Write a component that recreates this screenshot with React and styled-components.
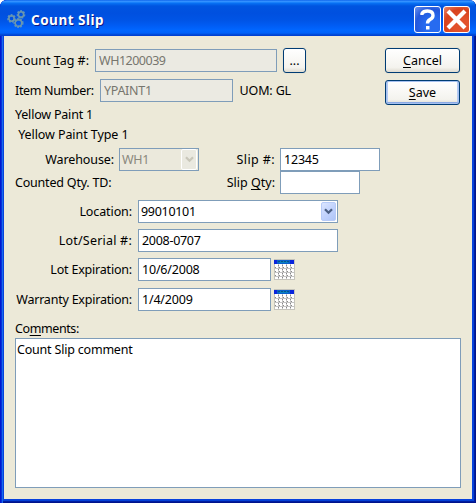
import React from "react";
import styled, { createGlobalStyle, css } from "styled-components";

const Global = createGlobalStyle`
  * { box-sizing: border-box; }
  body { margin: 0; background: #fff; }
`;

const Window = styled.main`
  width: 476px;
  height: 503px;
  padding: 0 4px 4px;
  display: flex;
  flex-direction: column;
  overflow: hidden;
  border-radius: 7px 7px 0 0;
  background: #0842dc;
  box-shadow: inset 1px 0 #0019cf, inset 2px 0 #0831d9, inset 3px 0 #166aee,
    inset -1px -1px #00138c, inset -2px -2px #001ea0, inset -3px -3px #0441d8;
  font-family: "Noto Sans", sans-serif;
  font-size: 12.5px;
  line-height: 15px;
  color: #000;
`;

const TitleBar = styled.header`
  height: 36px;
  flex: none;
  margin: 0 -4px;
  padding: 6px 6px 3px 7px;
  display: flex;
  align-items: center;
  background: linear-gradient(#0058e6 0, #3a93ff 1px, #2a8fff 2px, #0873f5 3px, #0055e0 6px,
    #0050df 13px, #0054e5 20px, #005df5 26px, #0066ff 30px, #0062fa 33px, #0044cf 35px, #003dd7 36px);
`;

const Title = styled.h1`
  flex: 1;
  margin: 1px 0 0 5px;
  font: bold 13.5px/18px "Noto Sans", sans-serif;
  letter-spacing: ${(p) => p.$track}px;
  color: #fff;
  text-shadow: 1px 1px #0a1883;
`;

const CaptionButton = styled.button`
  width: 27px;
  height: 27px;
  margin-left: 2px;
  padding: 0;
  border: 1px solid #fff;
  border-radius: 3px;
  background: ${(p) =>
    p.$close
      ? "radial-gradient(circle at 70% 75%, #e2512b 30%, #d8421d 65%, #e88a70 100%)"
      : "radial-gradient(circle at 70% 75%, #276bf0 30%, #2458dc 65%, #6d94ef 100%)"};
  svg { display: block; }
`;

const Body = styled.form`
  flex: 1;
  display: flex;
  flex-direction: column;
  padding: 12px 11px 11px;
  background: #ece9d8;
`;

const Row = styled.div`
  display: flex;
  align-items: center;
  height: ${(p) => p.$h || 23}px;
  margin-top: ${(p) => p.$top || 0}px;
`;

const Label = styled.label`
  flex: none;
  width: ${(p) => p.$w}px;
  padding-right: ${(p) => p.$gap || 0}px;
  text-align: ${(p) => (p.$gap ? "right" : "left")};
  letter-spacing: ${(p) => p.$track || 0}px;
  white-space: nowrap;
  u { text-decoration-thickness: 1px; text-underline-offset: 2px; }
`;

const frame = css`
  border: 1px solid #7f9db9;
  background: #fff;
  font: inherit;
  color: #000;
`;

const Field = styled.input`
  ${frame}
  flex: none;
  width: ${(p) => p.$w}px;
  height: 23px;
  padding: 0 3px 1px;
  letter-spacing: ${(p) => p.$track || 0}px;
  outline: none;
  border-radius: 0;
  &:disabled { background: #ebeae2; color: #77766e; }
`;

const Combo = styled.div`
  ${frame}
  flex: none;
  display: flex;
  align-items: center;
  width: ${(p) => p.$w}px;
  height: 23px;
  padding: 0 1px 0 2px;
  letter-spacing: ${(p) => p.$track || 0}px;
  ${(p) => p.$off && css`background: #ebe9dc; color: #8a887c;`}
  span { flex: 1; }
`;

const DropArrow = styled.i`
  display: flex;
  align-items: center;
  justify-content: center;
  width: ${(p) => (p.$off ? 16 : 15)}px;
  height: ${(p) => (p.$off ? 21 : 19)}px;
  border: 1px solid ${(p) => (p.$off ? "#fff" : "#b7cbf8")};
  border-radius: 2px;
  background: ${(p) => (p.$off ? "#eae9e0" : "linear-gradient(135deg, #dce6ff, #c2d3fd 50%, #afc5f7)")};
`;

const TopGrid = styled.section`
  display: flex;
  justify-content: space-between;
  height: 54px;
`;

const Actions = styled.div`
  display: flex;
  flex-direction: column;
  gap: 7px;
  margin-right: 1px;
`;

const Button = styled.button`
  width: ${(p) => p.$w || 75}px;
  height: 25px;
  flex: none;
  padding: 0 0 1px;
  border: 1px solid #003c74;
  border-radius: 3px;
  background: linear-gradient(#fff, #f4f3ee 80%, #dfdbd0);
  box-shadow: ${(p) => (p.$primary ? "inset 0 0 0 1px #a6c1f0, inset 0 -2px #8aa9e4, inset 2px 0 #b5cbf3, inset -2px 0 #b5cbf3" : "0 0 0 1px #e6e3d3")};
  font: inherit;
  letter-spacing: ${(p) => p.$track || 0}px;
  color: #000;
  u { text-decoration-thickness: 1px; text-underline-offset: 2px; }
`;

const BrowseButton = styled(Button)`
  margin-left: 6px;
`;

const Comments = styled.textarea`
  ${frame}
  display: block;
  width: 446px;
  height: 150px;
  padding: 3px 1px;
  letter-spacing: ${(p) => p.$track}px;
  resize: none;
  outline: none;
`;

const CalendarSvg = styled.svg`
  flex: none;
  margin-left: 3px;
`;

const Gears = () => (
  <svg width="19" height="19" viewBox="0 0 19 19" fill="none">
    <g stroke="#5590c4" strokeWidth="2.6" strokeDasharray="1.6 1.1">
      <circle cx="4.5" cy="8.5" r="3.1" />
      <circle cx="14" cy="4.5" r="3.1" />
      <circle cx="11.5" cy="13" r="3.8" />
    </g>
    <g stroke="#6c97ac" strokeWidth="1.5">
      <circle cx="4.5" cy="8.5" r="2.7" />
      <circle cx="14" cy="4.5" r="2.7" />
      <circle cx="11.5" cy="13" r="3.3" />
    </g>
  </svg>
);

const Arrow = ({ off }) => (
  <DropArrow $off={off}>
    <svg width="9" height="7" viewBox="0 0 9 7" fill="none">
      <path d="M1 1.2 4.5 4.7 8 1.2" stroke={off ? "#c9c7ba" : "#4d6185"} strokeWidth="2.3" />
    </svg>
  </DropArrow>
);

const Calendar = () => (
  <CalendarSvg width="21" height="21" viewBox="0 0 21 21" shapeRendering="crispEdges">
    <path d="M0 0H21V21H0Z" fill="#c5c4bc" />
    <path d="M1 1H20V20H1Z" fill="#fff" />
    <path d="M0 1H20V5H0Z" fill="#0824dc" />
    <path d="M3 1H16V5H3Z" fill="#0860cc" />
    <path d="M5 2H14V4H5Z" fill="#087fc0" />
    <path d="M4 2.5H15" stroke="#075187" strokeDasharray="2 1" />
    <path d="M4.5 5V20M8.5 5V20M12.5 5V20M16.5 5V20M1 9.5H20M1 13.5H20M1 17.5H20" stroke="#c4c4c4" />
    <path d="M4 6.5H18M4 10.5H18M4 14.5H18M4 18.5H18" stroke="#85858b" strokeDasharray="1 3" />
    <path d="M1 8.5H18M1 12.5H18M1 16.5H18" stroke="#8b8b8b" strokeDasharray="1 3" />
  </CalendarSvg>
);

export default function App() {
  return (
    <>
      <Global />
      <Window>
        <TitleBar>
          <Gears />
          <Title $track={0.5}>Count Slip</Title>
          <CaptionButton type="button" aria-label="Help">
            <svg width="25" height="25" viewBox="0 0 25 25" fill="none">
              <path d="M7 8V6.5Q8.5 4 12.5 4Q18 4 18 8.5Q18 11 15 12.5Q12.5 14 12.5 16.5" stroke="#fff" strokeWidth="3.4" />
              <path d="M11 19H14.5V22.5H11Z" fill="#fff" />
            </svg>
          </CaptionButton>
          <CaptionButton type="button" aria-label="Close" $close>
            <svg width="25" height="25" viewBox="0 0 25 25">
              <path d="M4 4 21 21M21 4 4 21" stroke="#fff" strokeWidth="4.2" />
            </svg>
          </CaptionButton>
        </TitleBar>
        <Body>
          <TopGrid>
            <div>
              <Row $h={25}>
                <Label $w={80}>Count <u>T</u>ag #:</Label>
                <Field $w={182} $track={-0.5} disabled defaultValue="WH1200039" />
                <BrowseButton type="button" $w={23}>...</BrowseButton>
              </Row>
              <Row $top={6}>
                <Label $w={85} $track={-0.35}>Item Number:</Label>
                <Field $w={133} $track={-0.3} disabled defaultValue="YPAINT1" />
                <Label as="span" $w={64} $gap={6} $track={-0.15}>UOM: GL</Label>
              </Row>
            </div>
            <Actions>
              <Button type="button"><u>C</u>ancel</Button>
              <Button type="button" $primary><u>S</u>ave</Button>
            </Actions>
          </TopGrid>
          <Row $h={20} $top={2}><Label as="span" $w={200} $track={-0.2}>Yellow Paint 1</Label></Row>
          <Row $h={20}><Label as="span" $w={200} $track={-0.08}>&nbsp;Yellow Paint Type 1</Label></Row>
          <Row $top={4}>
            <Label $w={104} $gap={5} $track={-0.1}>Warehouse:</Label>
            <Combo $w={80} $off $track={-0.3}><span>WH1</span><Arrow off /></Combo>
            <Label $w={81} $gap={5} $track={0.4}>Slip #:</Label>
            <Field $w={100} $track={-0.2} defaultValue="12345" />
          </Row>
          <Row>
            <Label as="span" $w={104} $track={-0.2}>Counted Qty. TD:</Label>
            <Label $w={161} $gap={5}>Slip <u>Q</u>ty:</Label>
            <Field $w={80} />
          </Row>
          <Row $top={6}>
            <Label $w={123} $gap={6} $track={-0.1}>Location:</Label>
            <Combo $w={200} $track={-0.3}><span>99010101</span><Arrow /></Combo>
          </Row>
          <Row $top={6}>
            <Label $w={123} $gap={6} $track={0.22}>Lot/Serial #:</Label>
            <Field $w={200} $track={-0.3} defaultValue="2008-0707" />
          </Row>
          <Row $top={6}>
            <Label $w={123} $gap={6} $track={-0.2}>Lot Expiration:</Label>
            <Field $w={133} $track={-0.2} defaultValue="10/6/2008" />
            <Calendar />
          </Row>
          <Row $top={7}>
            <Label $w={123} $gap={6} $track={-0.22}>Warranty Expiration:</Label>
            <Field $w={133} $track={-0.2} defaultValue="1/4/2009" />
            <Calendar />
          </Row>
          <Row $h={19} $top={8}><Label $w={200} $track={-0.4}>Co<u>m</u>ments:</Label></Row>
          <Comments $track={-0.2} defaultValue="Count Slip comment" />
        </Body>
      </Window>
    </>
  );
}
